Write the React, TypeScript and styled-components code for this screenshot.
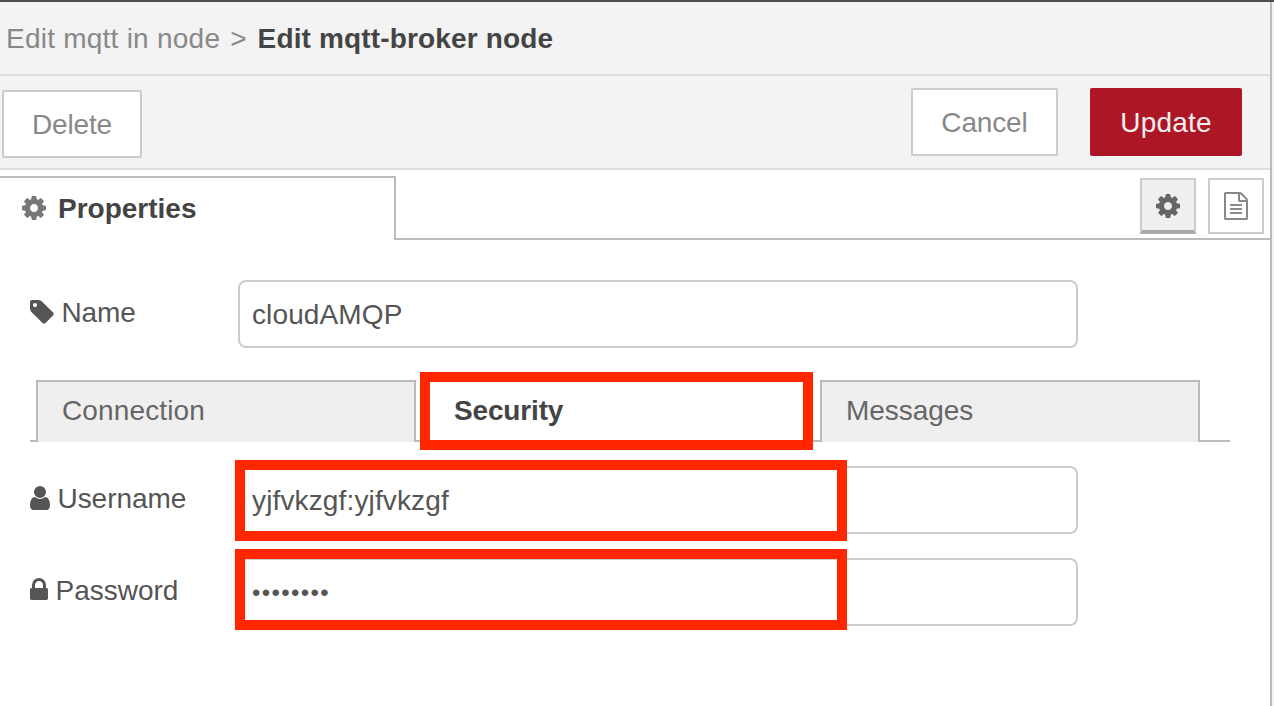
import React from 'react';
import styled, { createGlobalStyle, css } from 'styled-components';

const GlobalStyle = createGlobalStyle`
  *, *::before, *::after { box-sizing: border-box; }
  body {
    margin: 0;
    background: #f3f3f3;
    font-family: "Liberation Sans", Arial, sans-serif;
    font-size: 28px;
    line-height: 32px;
    color: #555;
  }
`;

const Page = styled.div`
  height: 706px;
  border-top: 2px solid #4f4c4e;
  overflow: hidden;
`;

const Tray = styled.main`
  display: flex;
  flex-direction: column;
  width: 1272px;
  height: 704px;
  background: #fff;
  border-right: 2px solid #bbb;
`;

const Text = styled.span<{ $spacing?: number }>`
  white-space: pre;
  letter-spacing: ${(p) => p.$spacing ?? 0}px;
`;

const Header = styled.header`
  display: flex;
  flex: none;
  height: 74px;
  padding: 21px 6px 0;
  background: #f3f3f3;
  border-bottom: 2px solid #ddd;
  color: #888;
`;

const Crumb = styled(Text)<{ $gap?: number }>`
  margin-left: ${(p) => p.$gap ?? 0}px;
`;

const CurrentCrumb = styled(Crumb)`
  font-weight: bold;
  color: #444;
`;

const Toolbar = styled.div`
  display: flex;
  flex: none;
  align-items: flex-start;
  height: 94px;
  padding: 12px 28px 0 2px;
  background: #f3f3f3;
  border-bottom: 2px solid #ddd;
`;

const Button = styled.button<{ $width: number; $primary?: boolean }>`
  display: flex;
  align-items: center;
  justify-content: center;
  width: ${(p) => p.$width}px;
  height: 68px;
  padding: 2px 0 0;
  border: 2px solid #ccc;
  border-radius: 2px;
  background: #fff;
  color: #888;
  font: inherit;
  ${(p) =>
    p.$primary &&
    css`
      border-color: #ad1625;
      background: #ad1625;
      color: #eee;
    `}
`;

const DeleteSlot = styled.div`
  margin-right: auto;
  padding-top: 2px;
`;

const Actions = styled.div`
  display: flex;
  gap: 32px;
`;

const TabBar = styled.div`
  display: flex;
  flex: none;
  align-items: flex-start;
  height: 70px;
  padding-top: 6px;
`;

const PropertiesTab = styled.div`
  display: flex;
  align-items: center;
  gap: 12px;
  width: 396px;
  height: 64px;
  padding: 0 0 0 22px;
  border: 2px solid #bbb;
  border-width: 2px 2px 0 0;
  border-bottom-right-radius: 2px;
  color: #777;
`;

const TabTitle = styled(Text)`
  font-weight: bold;
  color: #444;
`;

const TabRest = styled.div`
  display: flex;
  flex: 1;
  justify-content: flex-end;
  gap: 12px;
  height: 64px;
  margin-left: -1px;
  padding: 2px 6px 0 0;
  border-bottom: 2px solid #bbb;
`;

const IconButton = styled.button<{ $selected?: boolean }>`
  display: flex;
  align-items: center;
  justify-content: center;
  width: 56px;
  height: 56px;
  padding: 0 1px 0 0;
  border: 2px solid #ccc;
  background: #fff;
  color: #888;
  ${(p) =>
    p.$selected &&
    css`
      border-bottom: 4px solid #aaa;
      background: #efefef;
      color: #666;
    `}
`;

const Form = styled.form`
  display: flex;
  flex-direction: column;
  padding: 40px 40px 0 30px;
`;

const Row = styled.div`
  position: relative;
  display: flex;
  height: 68px;
`;

const Label = styled.label<{ $gap: number }>`
  display: flex;
  align-items: center;
  gap: ${(p) => p.$gap}px;
  width: 208.5px;
  height: 64px;
  margin-left: -0.5px;
  flex: none;

  > span {
    margin-top: 2px;
  }
`;

const Input = styled.input<{ $spacing?: number; $masked?: boolean }>`
  width: 840px;
  height: 68px;
  padding: 2px 12px 0;
  border: 2px solid #ccc;
  border-radius: 8px;
  outline: none;
  background: #fff;
  color: #555;
  font: inherit;
  font-size: ${(p) => (p.$masked ? 24 : 28)}px;
  letter-spacing: ${(p) => p.$spacing ?? 0}px;
`;

const SectionTabs = styled.div`
  display: flex;
  gap: 12px;
  height: 62px;
  margin: 32px 0 24px;
  padding-left: 6px;
  background: linear-gradient(#bbb, #bbb) 0 100% / 100% 2px no-repeat;
`;

const SectionTab = styled.div<{ $active?: boolean }>`
  position: relative;
  display: flex;
  align-items: flex-start;
  width: 380px;
  padding: 13px 0 0 24px;
  border: 2px solid #bbb;
  border-bottom: 0;
  background: ${(p) => (p.$active ? '#fff' : '#efefef')};
  color: ${(p) => (p.$active ? '#444' : '#666')};
  font-weight: ${(p) => (p.$active ? 'bold' : 'normal')};
`;

const Credentials = styled.div`
  display: flex;
  flex-direction: column;
  gap: 24px;
`;

/* Annotation frames drawn over the tab and the two credential fields. */
const Highlight = styled.div`
  position: absolute;
  border: 10px solid #ff2600;
  pointer-events: none;
`;

const TabHighlight = styled(Highlight)`
  top: -10px;
  left: -10px;
  width: 393px;
  height: 78px;
`;

const FieldHighlight = styled(Highlight)<{ $top: number }>`
  top: ${(p) => p.$top}px;
  left: 205px;
  width: 612px;
  height: 81px;
`;

const Svg = styled.svg<{ $shift?: number }>`
  display: block;
  flex: none;
  fill: currentColor;
  margin-top: ${(p) => p.$shift ?? 0}px;
`;

const CogIcon = ({ shift }: { shift?: number }) => (
  <Svg $shift={shift} width="24" height="24" viewBox="0 128 1536 1536">
    <path d="M1024 896q0-106-75-181t-181-75-181 75-75 181 75 181 181 75 181-75 75-181zm512-109v222q0 12-8 23t-20 13l-185 28q-19 54-39 91 35 50 107 138 10 12 10 25t-9 23q-27 37-99 108t-94 71q-12 0-26-9l-138-108q-44 23-91 38-16 136-29 186-7 28-36 28h-222q-14 0-24.500-8.500t-11.500-21.500l-28-184q-49-16-90-37l-141 107q-10 9-25 9-14 0-25-11-126-114-165-168-7-10-7-23 0-12 8-23 15-21 51-66.500t54-70.500q-27-50-41-99l-183-27q-13-2-21-12.500t-8-23.500v-222q0-12 8-23t19-13l186-28q14-46 39-92-40-57-107-138-10-12-10-24 0-10 9-23 26-36 98.500-107.500t94.500-71.500q13 0 26 10l138 107q44-23 91-38 16-136 29-186 7-28 36-28h222q14 0 24.500 8.500t11.500 21.500l28 184q49 16 90 37l142-107q9-9 24-9 13 0 25 10 129 119 165 170 7 8 7 22 0 12-8 23-15 21-51 66.500t-54 70.500q26 50 41 98l183 28q13 2 21 12.500t8 23.500z" />
  </Svg>
);

const FileIcon = () => (
  <Svg width="24" height="28" viewBox="128 0 1536 1792">
    <path d="M1596 380q28 28 48 76t20 88v1152q0 40-28 68t-68 28h-1344q-40 0-68-28t-28-68v-1600q0-40 28-68t68-28h896q40 0 88 20t76 48zm-444-244v376h376q-10-29-22-41l-313-313q-12-12-41-22zm384 1528v-1024h-416q-40 0-68-28t-28-68v-416h-768v1536h1280zm-1024-864q0-14 9-23t23-9h704q14 0 23 9t9 23v64q0 14-9 23t-23 9h-704q-14 0-23-9t-9-23v-64zm736 224q14 0 23 9t9 23v64q0 14-9 23t-23 9h-704q-14 0-23-9t-9-23v-64q0-14 9-23t23-9h704zm0 256q14 0 23 9t9 23v64q0 14-9 23t-23 9h-704q-14 0-23-9t-9-23v-64q0-14 9-23t23-9h704z" />
  </Svg>
);

const TagIcon = () => (
  <Svg width="24" height="24" viewBox="128 128 1536 1536">
    <path d="M576 448q0-53-37.500-90.500t-90.500-37.500-90.500 37.500-37.500 90.500 37.500 90.500 90.500 37.500 90.500-37.500 37.500-90.500zm1067 576q0 53-37 90l-491 492q-39 37-91 37-53 0-90-37l-715-716q-38-37-64.500-101t-26.500-117v-416q0-52 38-90t90-38h416q53 0 117 26.500t102 64.500l715 714q37 39 37 91z" />
  </Svg>
);

const UserIcon = () => (
  <Svg width="20" height="24" viewBox="256 128 1280 1536">
    <path d="M1536 1399q0 109-62.500 187t-150.500 78h-854q-88 0-150.500-78t-62.500-187q0-85 8.500-160.500t31.500-152 58.500-131 94-89 134.500-34.500q131 128 313 128t313-128q76 0 134.500 34.500t94 89 58.500 131 31.500 152 8.500 160.500zm-256-887q0 159-112.500 271.500t-271.500 112.500-271.500-112.500-112.500-271.500 112.500-271.500 271.500-112.500 271.500 112.500 112.500 271.500z" />
  </Svg>
);

const LockIcon = () => (
  <Svg width="18" height="22" viewBox="320 128 1152 1408" $shift={-2}>
    <path d="M640 768h512v-192q0-106-75-181t-181-75-181 75-75 181v192zm832 96v576q0 40-28 68t-68 28h-960q-40 0-68-28t-28-68v-576q0-40 28-68t68-28h32v-192q0-184 132-316t316-132 316 132 132 316v192h32q40 0 68 28t28 68z" />
  </Svg>
);

export default function App() {
  return (
    <>
      <GlobalStyle />
      <Page>
        <Tray>
          <Header>
            <Crumb $spacing={0.24}>Edit mqtt in node</Crumb>
            <Crumb $gap={10}>&gt;</Crumb>
            <CurrentCrumb $gap={11} $spacing={0.15}>
              Edit mqtt-broker node
            </CurrentCrumb>
          </Header>
          <Toolbar>
            <DeleteSlot>
              <Button type="button" $width={140}>
                <Text $spacing={-0.15}>Delete</Text>
              </Button>
            </DeleteSlot>
            <Actions>
              <Button type="button" $width={147}>
                <Text $spacing={-0.15}>Cancel</Text>
              </Button>
              <Button type="button" $width={152} $primary>
                <Text $spacing={0.2}>Update</Text>
              </Button>
            </Actions>
          </Toolbar>
          <TabBar>
            <PropertiesTab>
              <CogIcon shift={-2} />
              <TabTitle>Properties</TabTitle>
            </PropertiesTab>
            <TabRest>
              <IconButton type="button" $selected>
                <CogIcon shift={2} />
              </IconButton>
              <IconButton type="button">
                <FileIcon />
              </IconButton>
            </TabRest>
          </TabBar>
          <Form>
            <Row>
              <Label $gap={8}>
                <TagIcon />
                <Text $spacing={-0.1}>Name</Text>
              </Label>
              <Input readOnly value="cloudAMQP" $spacing={0.12} />
            </Row>
            <SectionTabs>
              <SectionTab>
                <Text $spacing={0.13}>Connection</Text>
              </SectionTab>
              <SectionTab $active>
                <Text $spacing={-0.15}>Security</Text>
                <TabHighlight />
              </SectionTab>
              <SectionTab>
                <Text $spacing={-0.05}>Messages</Text>
              </SectionTab>
            </SectionTabs>
            <Credentials>
              <Row>
                <Label $gap={8}>
                  <UserIcon />
                  <Text $spacing={-0.05}>Username</Text>
                </Label>
                <Input readOnly value="yjfvkzgf:yjfvkzgf" $spacing={0.14} />
                <FieldHighlight $top={-6} />
              </Row>
              <Row>
                <Label $gap={8}>
                  <LockIcon />
                  <Text>Password</Text>
                </Label>
                <Input readOnly value="••••••••" $masked $spacing={1.35} />
                <FieldHighlight $top={-9} />
              </Row>
            </Credentials>
          </Form>
        </Tray>
      </Page>
    </>
  );
}
